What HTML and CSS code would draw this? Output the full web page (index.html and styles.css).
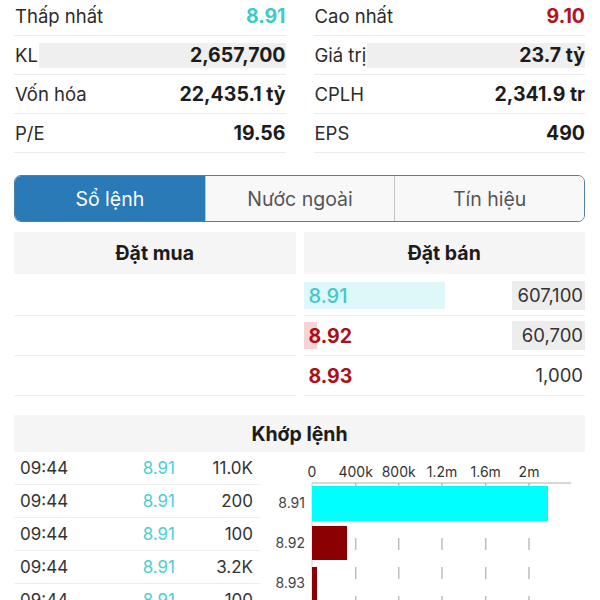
FILE: index.html
```html
<!DOCTYPE html>
<html lang="vi">
<head>
<meta charset="utf-8">
<title>Sổ lệnh</title>
<link rel="stylesheet" href="styles.css">
</head>
<body>
<div class="page">
  <section class="stats">
    <div class="col">
      <div class="row"><span class="lbl">Thấp nhất</span><span class="val cyan">8.91</span></div>
      <div class="row"><span class="lbl">KL</span><span class="val hl">2,657,700</span></div>
      <div class="row"><span class="lbl">Vốn hóa</span><span class="val">22,435.1 tỷ</span></div>
      <div class="row"><span class="lbl">P/E</span><span class="val">19.56</span></div>
    </div>
    <div class="col">
      <div class="row"><span class="lbl">Cao nhất</span><span class="val red">9.10</span></div>
      <div class="row"><span class="lbl">Giá trị</span><span class="val hl">23.7 tỷ</span></div>
      <div class="row"><span class="lbl">CPLH</span><span class="val">2,341.9 tr</span></div>
      <div class="row"><span class="lbl">EPS</span><span class="val">490</span></div>
    </div>
  </section>

  <nav class="tabs">
    <div class="tab active">Sổ lệnh</div>
    <div class="tab">Nước ngoài</div>
    <div class="tab">Tín hiệu</div>
  </nav>

  <section class="book">
    <div class="side">
      <div class="bh">Đặt mua</div>
      <div class="brows">
        <div class="brow"></div>
        <div class="brow"></div>
        <div class="brow"></div>
      </div>
    </div>
    <div class="side">
      <div class="bh">Đặt bán</div>
      <div class="brows">
        <div class="brow">
          <div class="price"><span class="bar bar-cyan" style="width:141px"></span><span class="ptxt cyan med">8.91</span></div>
          <div class="vol hl">607,100</div>
        </div>
        <div class="brow">
          <div class="price"><span class="bar bar-pink" style="width:13px"></span><span class="ptxt dred">8.92</span></div>
          <div class="vol hl">60,700</div>
        </div>
        <div class="brow">
          <div class="price"><span class="ptxt dred">8.93</span></div>
          <div class="vol">1,000</div>
        </div>
      </div>
    </div>
  </section>

  <div class="kh">Khớp lệnh</div>

  <section class="match">
    <div class="trades">
      <div class="trow"><span>09:44</span><span class="tp">8.91</span><span class="tv">11.0K</span></div>
      <div class="trow"><span>09:44</span><span class="tp">8.91</span><span class="tv">200</span></div>
      <div class="trow"><span>09:44</span><span class="tp">8.91</span><span class="tv">100</span></div>
      <div class="trow"><span>09:44</span><span class="tp">8.91</span><span class="tv">3.2K</span></div>
      <div class="trow"><span>09:44</span><span class="tp">8.91</span><span class="tv">100</span></div>
    </div>
    <svg class="chart" width="315" height="160" viewBox="0 0 315 160">
      <g class="xt">
        <text x="42" y="25">0</text>
        <text x="85.7" y="25">400k</text>
        <text x="128.7" y="25">800k</text>
        <text x="172" y="25">1.2m</text>
        <text x="215.7" y="25">1.6m</text>
        <text x="259" y="25">2m</text>
      </g>
      <g class="grid">
        <line x1="85.7" y1="31" x2="85.7" y2="160"/>
        <line x1="128.7" y1="31" x2="128.7" y2="160"/>
        <line x1="172" y1="31" x2="172" y2="160"/>
        <line x1="215.7" y1="31" x2="215.7" y2="160"/>
        <line x1="259" y1="31" x2="259" y2="160"/>
      </g>
      <line class="axis" x1="42" y1="31" x2="301" y2="31"/>
      <line class="yaxis" x1="42" y1="31" x2="42" y2="160"/>
      <rect x="42" y="34" width="236" height="35" fill="#00ffff"/>
      <rect x="42" y="74" width="35" height="34" fill="#8b0000"/>
      <rect x="42" y="115" width="5" height="45" fill="#8b0000"/>
      <g class="yt">
        <text x="35" y="56">8.91</text>
        <text x="35" y="96">8.92</text>
        <text x="35" y="136">8.93</text>
      </g>
    </svg>
  </section>
</div>
</body>
</html>
```

FILE: styles.css
```css
* { box-sizing: border-box; }
html, body { margin: 0; padding: 0; background: #fff; }
body {
  font-family: Inter, "Noto Sans", "DejaVu Sans", sans-serif;
  font-size: 18.5px;
  color: #222;
  overflow: hidden;
}
.page { width: 600px; }

.cyan { color: #3fcacb; }
.red { color: #b3131d; }
.dred { color: #a8101a; font-weight: 700; font-size: 19.5px; }
.med { font-weight: 500; font-size: 20px; }

/* stats */
.stats {
  display: grid;
  grid-template-columns: 1fr 1fr;
  column-gap: 28px;
  padding: 0 15px 0 14px;
  margin-top: -3px;
}
.row {
  display: flex;
  align-items: center;
  height: 39px;
  border-bottom: 1px solid #ececec;
}
.lbl { padding-left: 1px; color: #2b2b2b; }
.val { margin-left: auto; font-weight: 700; font-size: 19.5px; color: #1c1c1c; }
.val.cyan { color: #3fcacb; }
.val.red { color: #b3131d; }
.val.hl {
  flex: 1;
  margin-left: 1px;
  height: 25px;
  line-height: 25px;
  text-align: right;
  background: #efefef;
}

/* tabs */
.tabs {
  display: grid;
  grid-template-columns: 1fr 1fr 1fr;
  margin: 22px 15px 0 14px;
  height: 47px;
  border: 1.5px solid #4f7fa3;
  border-radius: 7px;
  overflow: hidden;
  font-size: 19.5px;
}
.tab {
  display: flex;
  align-items: center;
  justify-content: center;
  background: #f8f8f8;
  color: #555;
  border-left: 1px solid #c3c3c3;
}
.tab:first-child { border-left: none; }
.tab.active { background: #2a7ab8; color: #fff; }

/* order book */
.book {
  display: grid;
  grid-template-columns: 1fr 1fr;
  column-gap: 8px;
  margin: 10px 15px 0 14px;
}
.bh {
  height: 42px;
  display: flex;
  align-items: center;
  justify-content: center;
  background: #f5f5f5;
  font-weight: 700;
  font-size: 19.5px;
  color: #1c1c1c;
}
.brows { margin-top: 2px; }
.brow {
  display: flex;
  align-items: center;
  height: 40px;
  border-bottom: 1px solid #eeeeee;
}
.price {
  position: relative;
  flex: 1;
  height: 27px;
  display: flex;
  align-items: center;
  padding-left: 5px;
}
.bar { position: absolute; left: 0; top: 0; bottom: 0; }
.bar-cyan { background: #def7f8; }
.bar-pink { background: #f6d4d5; }
.ptxt { position: relative; }
.vol {
  width: 73px;
  height: 29px;
  line-height: 29px;
  text-align: right;
  padding-right: 2px;
  color: #333;
}
.vol.hl { background: #ededed; }

/* matched */
.kh {
  margin: 19px 15px 0 14px;
  height: 37px;
  display: flex;
  align-items: center;
  justify-content: center;
  background: #f5f5f5;
  font-weight: 700;
  font-size: 19.5px;
  color: #1c1c1c;
}
.match {
  display: grid;
  grid-template-columns: 246px 315px;
  column-gap: 10px;
  margin-left: 14px;
}
.trow {
  display: grid;
  grid-template-columns: 1fr 60px 78px;
  align-items: center;
  height: 33px;
  padding: 0 7px 0 6px;
  border-bottom: 1px solid #efefef;
  font-size: 17px;
  color: #333;
}
.tp, .tv { text-align: right; }
.tp { color: #4fcfd0; }

.chart { display: block; font-family: Inter, "Noto Sans", sans-serif; }
.xt text { font-size: 14px; fill: #333; text-anchor: middle; }
.yt text { font-size: 14px; fill: #444; text-anchor: end; }
.grid line { stroke: #bdbdbd; stroke-width: 1.5; stroke-dasharray: 12 17; stroke-dashoffset: 3; }
.axis { stroke: #b0b0b0; stroke-width: 1; }
.yaxis { stroke: #d0d0d0; stroke-width: 1; }
```
